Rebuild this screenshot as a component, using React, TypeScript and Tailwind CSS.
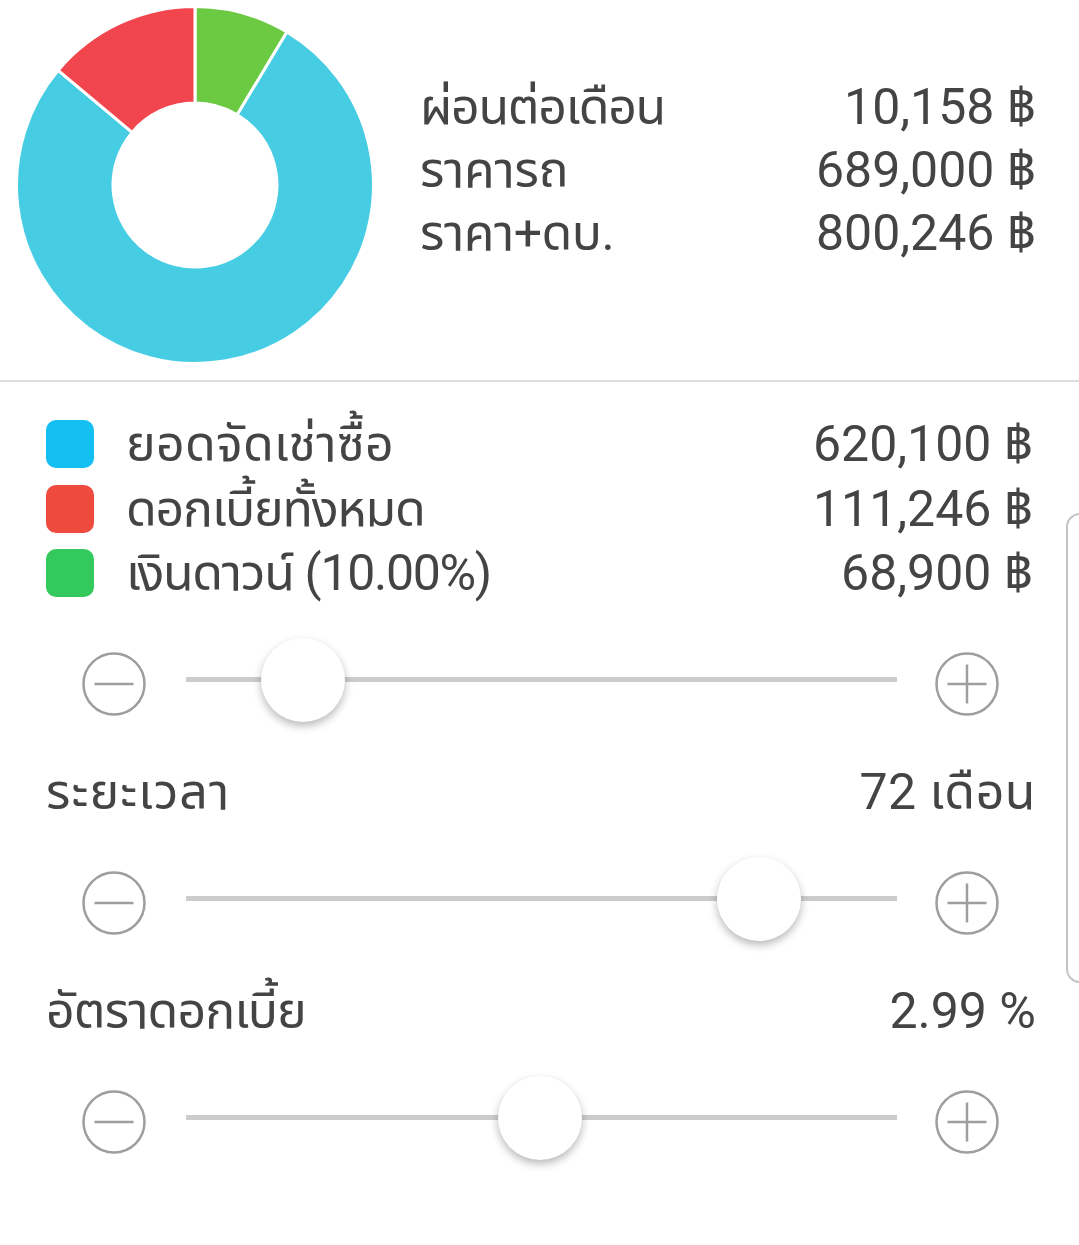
import React from 'react'

const FONT = { fontFamily: 'Roboto, "Noto Sans Thai", "Noto Sans Thai UI", "Noto Sans", sans-serif' }

const SLICES = [
  { value: 68900, color: '#6cc942' },
  { value: 620100, color: '#47cde3' },
  { value: 111246, color: '#f2464f' },
]

function sector(cx: number, cy: number, r0: number, r1: number, a0: number, a1: number) {
  const pt = (r: number, a: number) => {
    const t = (a * Math.PI) / 180
    return [cx + r * Math.sin(t), cy - r * Math.cos(t)]
  }
  const large = a1 - a0 > 180 ? 1 : 0
  const [x0, y0] = pt(r1, a0)
  const [x1, y1] = pt(r1, a1)
  const [x2, y2] = pt(r0, a1)
  const [x3, y3] = pt(r0, a0)
  return `M${x0} ${y0} A${r1} ${r1} 0 ${large} 1 ${x1} ${y1} L${x2} ${y2} A${r0} ${r0} 0 ${large} 0 ${x3} ${y3} Z`
}

function Donut() {
  const total = SLICES.reduce((s, d) => s + d.value, 0)
  let acc = 0
  return (
    <svg width="360" height="360" viewBox="0 0 360 360">
      {SLICES.map((d, i) => {
        const a0 = (acc / total) * 360
        acc += d.value
        const a1 = (acc / total) * 360
        return (
          <path
            key={i}
            d={sector(180, 180, 82, 178.5, a0, a1)}
            fill={d.color}
            stroke="#fff"
            strokeWidth="3"
            strokeLinejoin="round"
          />
        )
      })}
    </svg>
  )
}

function RoundIcon({ plus }: { plus?: boolean }) {
  return (
    <svg width="64" height="64" viewBox="0 0 64 64" className="shrink-0">
      <circle cx="32" cy="32" r="30.5" fill="none" stroke="#9e9e9e" strokeWidth="2.5" />
      <line x1="12.5" y1="32" x2="51.5" y2="32" stroke="#9e9e9e" strokeWidth="2.5" />
      {plus && <line x1="32" y1="12.5" x2="32" y2="51.5" stroke="#9e9e9e" strokeWidth="2.5" />}
    </svg>
  )
}

function Slider({ pos }: { pos: number }) {
  return (
    <div className="flex h-[100px] items-center pl-[82px] pr-[80px]">
      <div className="translate-y-[4px]">
        <RoundIcon />
      </div>
      <div className="relative ml-[40px] mr-[38px] h-[5px] flex-1 bg-[#cccccc]">
        <div
          className="absolute top-1/2 h-[84px] w-[84px] -translate-x-1/2 -translate-y-1/2 rounded-full bg-white shadow-[0_4px_8px_rgba(0,0,0,0.28)]"
          style={{ left: `${pos}%` }}
        />
      </div>
      <div className="translate-y-[4px]">
        <RoundIcon plus />
      </div>
    </div>
  )
}

const SUMMARY = [
  { label: 'ผ่อนต่อเดือน', value: '10,158 ฿', track: 'tracking-[-1.3px]' },
  { label: 'ราคารถ', value: '689,000 ฿', track: 'tracking-[-0.3px]' },
  { label: 'ราคา+ดบ.', value: '800,246 ฿', track: 'tracking-[-0.5px]' },
]

const LEGEND = [
  { color: '#14c0f2', label: 'ยอดจัดเช่าซื้อ', value: '620,100 ฿', track: 'tracking-[0.3px]' },
  { color: '#ee4a3e', label: 'ดอกเบี้ยทั้งหมด', value: '111,246 ฿', track: 'tracking-[-1.2px]' },
  { color: '#33c95d', label: 'เงินดาวน์ (10.00%)', value: '68,900 ฿', track: 'tracking-[-1.3px]' },
]

export default function App() {
  return (
    <div className="relative h-[1245px] w-[1079px] overflow-hidden bg-white text-[#444]" style={FONT}>
      {/* Chart + totals */}
      <div className="flex h-[380px]">
        <div className="pl-[15px] pt-[5px]">
          <Donut />
        </div>
        <div className="flex-1 pl-[45px] pr-[43px] pt-[76px] text-[50px] leading-[63px]">
          {SUMMARY.map(r => (
            <div key={r.label} className="flex justify-between">
              <span className={r.track}>{r.label}</span>
              <span>{r.value}</span>
            </div>
          ))}
        </div>
      </div>
      <div className="h-[2px] bg-[#dddddd]" />

      {/* Legend */}
      <div className="pl-[46px] pr-[46px] pt-[30px] text-[50px] leading-[64.5px]">
        {LEGEND.map(r => (
          <div key={r.label} className="flex items-center">
            <div className="h-[48px] w-[48px] rounded-[10px]" style={{ background: r.color }} />
            <span className={`ml-[32px] flex-1 ${r.track}`}>{r.label}</span>
            <span>{r.value}</span>
          </div>
        ))}
      </div>

      <div className="mt-[24px]">
        <Slider pos={16.5} />
      </div>

      <div className="mt-[31px] flex h-[64px] items-center justify-between pl-[46px] pr-[43px] text-[50px]">
        <span className="tracking-[1.1px]">ระยะเวลา</span>
        <span className="tracking-[0.5px]">72 เดือน</span>
      </div>
      <div className="mt-[24px]">
        <Slider pos={80.6} />
      </div>

      <div className="mt-[31px] flex h-[64px] items-center justify-between pl-[46px] pr-[43px] text-[50px]">
        <span className="tracking-[-0.9px]">อัตราดอกเบี้ย</span>
        <span>2.99 %</span>
      </div>
      <div className="mt-[24px]">
        <Slider pos={49.8} />
      </div>

      {/* edge handle */}
      <div className="absolute left-[1066px] top-[513px] h-[470px] w-[30px] rounded-l-[14px] border-2 border-[#c4c4c4]" />
    </div>
  )
}
